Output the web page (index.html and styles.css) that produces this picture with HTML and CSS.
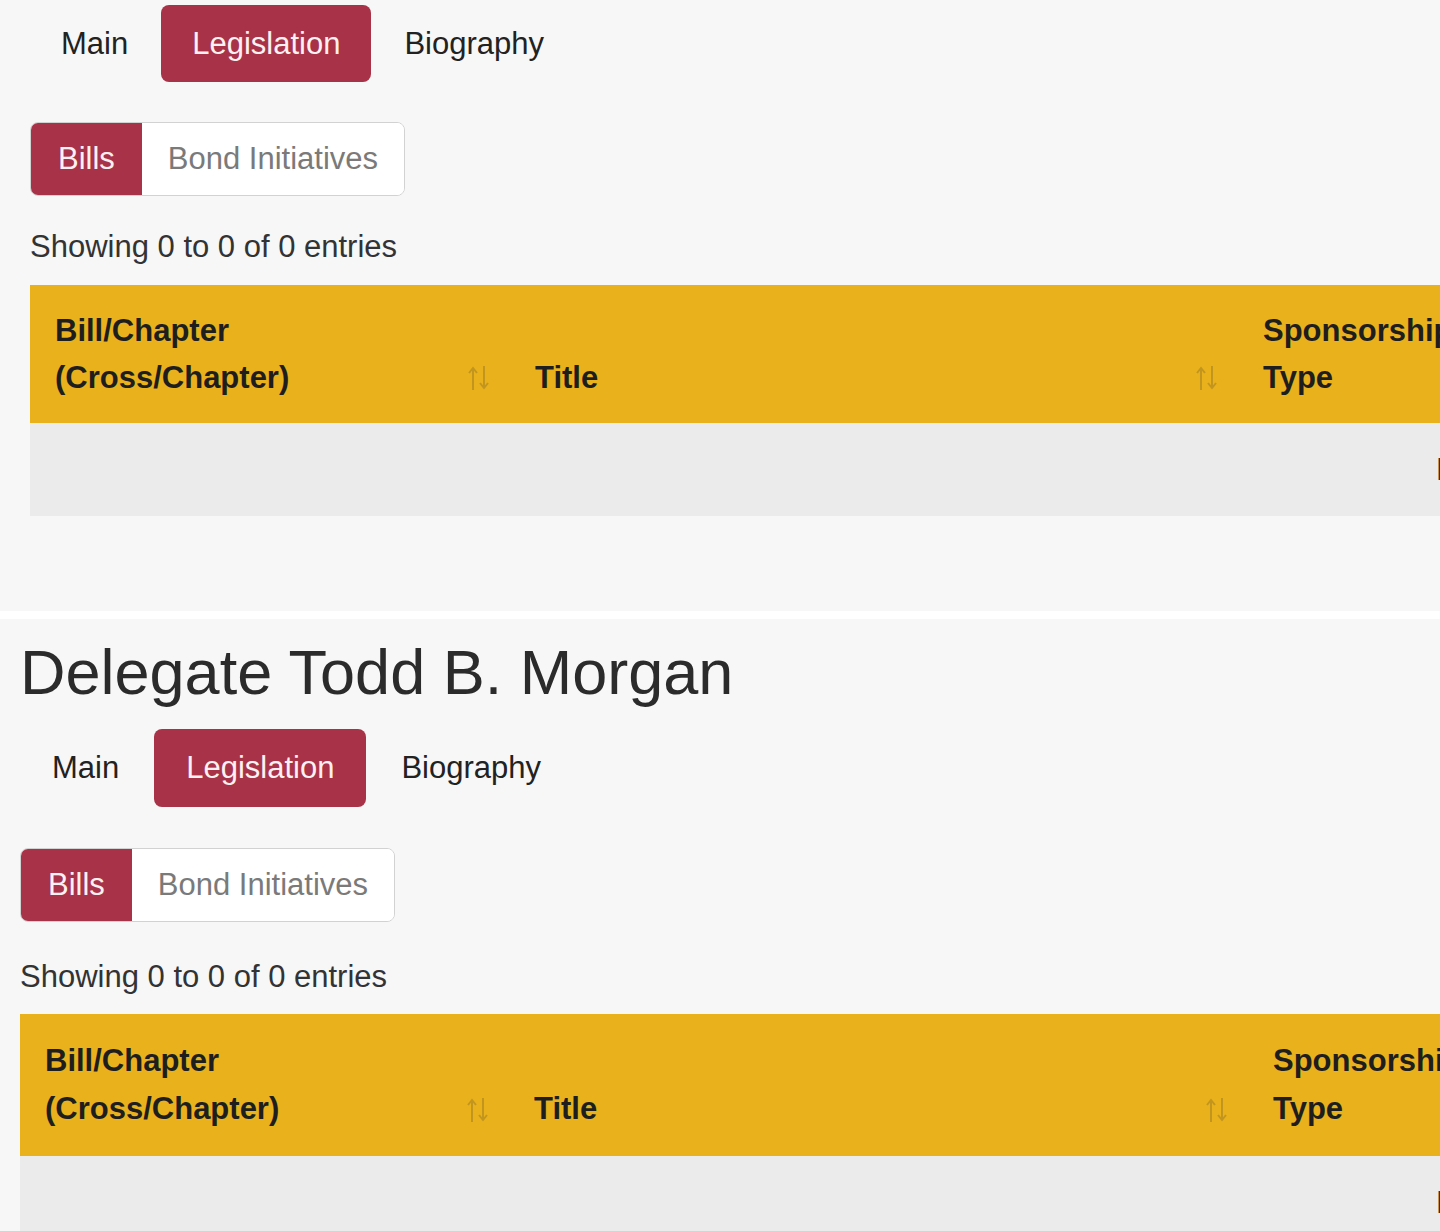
FILE: index.html
```html
<!DOCTYPE html>
<html lang="en">
<head>
<meta charset="utf-8">
<title>Delegate Todd B. Morgan - Legislation</title>
<link rel="stylesheet" href="styles.css">
</head>
<body>
<section class="member member--first">
  <ul class="nav-pills">
    <li><a class="pill" href="#">Main</a></li>
    <li><a class="pill pill--active" href="#">Legislation</a></li>
    <li><a class="pill" href="#">Biography</a></li>
  </ul>
  <div class="btn-group">
    <button class="btn btn--active" type="button">Bills</button>
    <button class="btn" type="button">Bond Initiatives</button>
  </div>
  <p class="info">Showing 0 to 0 of 0 entries</p>
  <table class="bills bills--first">
    <colgroup>
      <col class="c1">
      <col class="c2">
      <col>
    </colgroup>
    <thead>
      <tr>
        <th><div class="th-inner"><span class="th-label th-label--bill">Bill/Chapter (Cross/Chapter)</span><svg class="sort" viewBox="0 0 28 28" width="28" height="28"><path d="M8 26V4M4 9l4-5 4 5"/><path d="M19 2v22M15 19l4 5 4-5"/></svg></div></th>
        <th><div class="th-inner"><span>Title</span><svg class="sort" viewBox="0 0 28 28" width="28" height="28"><path d="M8 26V4M4 9l4-5 4 5"/><path d="M19 2v22M15 19l4 5 4-5"/></svg></div></th>
        <th><div class="th-inner"><span class="th-label">Sponsorship Type</span></div></th>
      </tr>
    </thead>
    <tbody>
      <tr><td class="empty" colspan="3">No data available in table</td></tr>
    </tbody>
  </table>
</section>
<div class="divider"></div>
<section class="member member--second">
  <h2 class="member-name">Delegate Todd B. Morgan</h2>
  <ul class="nav-pills">
    <li><a class="pill" href="#">Main</a></li>
    <li><a class="pill pill--active" href="#">Legislation</a></li>
    <li><a class="pill" href="#">Biography</a></li>
  </ul>
  <div class="btn-group">
    <button class="btn btn--active" type="button">Bills</button>
    <button class="btn" type="button">Bond Initiatives</button>
  </div>
  <p class="info info--second">Showing 0 to 0 of 0 entries</p>
  <table class="bills bills--second">
    <colgroup>
      <col class="c1">
      <col class="c2">
      <col>
    </colgroup>
    <thead>
      <tr>
        <th><div class="th-inner"><span class="th-label th-label--bill">Bill/Chapter (Cross/Chapter)</span><svg class="sort" viewBox="0 0 28 28" width="28" height="28"><path d="M8 26V4M4 9l4-5 4 5"/><path d="M19 2v22M15 19l4 5 4-5"/></svg></div></th>
        <th><div class="th-inner"><span>Title</span><svg class="sort" viewBox="0 0 28 28" width="28" height="28"><path d="M8 26V4M4 9l4-5 4 5"/><path d="M19 2v22M15 19l4 5 4-5"/></svg></div></th>
        <th><div class="th-inner"><span class="th-label">Sponsorship Type</span></div></th>
      </tr>
    </thead>
    <tbody>
      <tr><td class="empty" colspan="3">No data available in table</td></tr>
    </tbody>
  </table>
</section>
</body>
</html>
```

FILE: styles.css
```css
html, body {
  margin: 0;
  padding: 0;
}

body {
  background: #ffffff;
  font-family: "Liberation Sans", Arial, sans-serif;
  font-size: 31px;
  color: #333333;
  overflow-x: hidden;
}

.member {
  background: #f7f7f7;
}

.member--first {
  padding: 5px 0 95px 30px;
}

.member--second {
  padding: 17px 0 40px 20px;
}

.divider {
  height: 8px;
  background: #ffffff;
}

.member-name {
  margin: 0 0 21px;
  font-size: 63px;
  font-weight: normal;
  line-height: 72px;
  color: #2b2b2b;
}

/* nav pills */
.nav-pills {
  display: flex;
  margin: 0;
  padding: 0;
  list-style: none;
}

.nav-pills li + li {
  margin-left: 2px;
}

.pill {
  display: block;
  height: 77px;
  padding: 0 31px;
  line-height: 77px;
  border-radius: 8px;
  color: #222222;
  text-decoration: none;
}

.pill--active {
  background: #a83247;
  color: #fdf0f3;
}

.member--second .pill {
  height: 78px;
  line-height: 78px;
  padding: 0 32px;
}

.member--second .nav-pills li + li {
  margin-left: 3px;
}

/* button group */
.btn-group {
  display: inline-flex;
  margin-top: 40px;
  border: 1px solid #d2d2d2;
  border-radius: 8px;
  overflow: hidden;
  background: #ffffff;
}

.member--second .btn-group {
  margin-top: 41px;
}

.btn {
  height: 72px;
  margin: 0;
  padding: 0 26px;
  border: 0;
  background: #ffffff;
  font-family: inherit;
  font-size: 31px;
  line-height: 72px;
  color: #7a7a7a;
}

.btn--active {
  padding: 0 27px;
  background: #a83247;
  color: #fdf0f3;
}

/* info */
.info {
  margin: 27px 0 15px;
  line-height: 47px;
  color: #333333;
}

.info--second {
  margin-top: 31px;
  margin-bottom: 14px;
}

/* table */
.bills {
  border-collapse: collapse;
  table-layout: fixed;
}

.bills--first {
  width: 3160px;
}

.bills--first .c1 { width: 480px; }
.bills--first .c2 { width: 728px; }

.bills--second {
  width: 3180px;
}

.bills--second .c1 { width: 489px; }
.bills--second .c2 { width: 739px; }

.bills th {
  padding: 22px 17px 22px 25px;
  background: #e9b11c;
  text-align: left;
  vertical-align: bottom;
  font-weight: bold;
  line-height: 47px;
  color: #1e1e1e;
}

.bills--second th {
  padding-top: 23px;
  padding-bottom: 23px;
  line-height: 48px;
}

.th-inner {
  display: flex;
  align-items: flex-end;
  justify-content: space-between;
}

.th-label {
  display: block;
  width: 200px;
}

.th-label--bill {
  width: 300px;
}

.sort {
  flex-shrink: 0;
  margin-bottom: 9px;
  fill: none;
  stroke: #2a2a2a;
  stroke-width: 2;
  opacity: 0.2;
}

.bills td.empty {
  padding: 23px 25px;
  background: #ebebeb;
  text-align: center;
  line-height: 47px;
  color: #333333;
}
```
